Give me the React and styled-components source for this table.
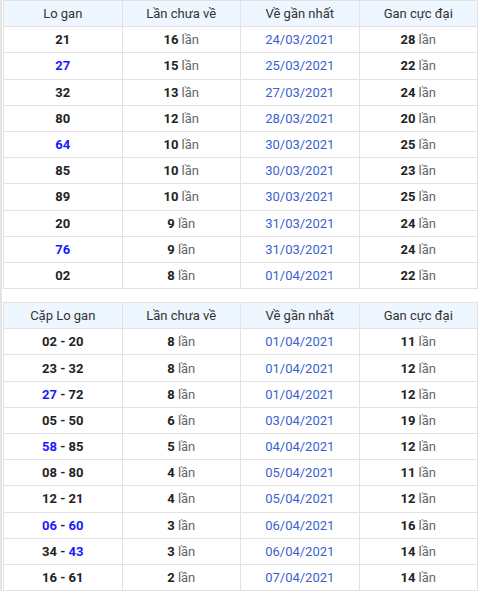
import React from "react";
import styled, { createGlobalStyle } from "styled-components";

const Global = createGlobalStyle`
  html, body { margin: 0; padding: 0; background: #fff; }
  body { font-family: Roboto, "Liberation Sans", Arial, sans-serif; }
`;

const Page = styled.div`
  width: 480px;
  box-sizing: border-box;
  border-left: 2px solid #e4e4e4;
  padding: 0 2px 0 1px;
  display: flex;
  flex-direction: column;
  gap: 13px;
`;

const Table = styled.table`
  width: 475px;
  border-collapse: collapse;
  table-layout: fixed;
  border: 1px solid #e2e2e2;
`;

const Th = styled.th`
  height: 25.2px;
  padding: 0;
  background: #eef6ff;
  border: 1px solid #e2e2e2;
  font-weight: 400;
  font-size: 13px;
  color: #333;
  text-align: center;
`;

const Td = styled.td`
  height: 25.2px;
  padding: 0;
  border: 1px solid #e2e2e2;
  font-size: 13px;
  text-align: center;
  color: ${(p) => (p.$date ? "#3b5fcf" : "#222")};
`;

const Num = styled.b`
  font-weight: 700;
  color: ${(p) => (p.$blue ? "#1a1aff" : "#222")};
`;

const Unit = styled.span`
  color: #666;
  font-weight: 400;
`;

const loGan = [
  ["21", 16, "24/03/2021", 28],
  ["27", 15, "25/03/2021", 22, true],
  ["32", 13, "27/03/2021", 24],
  ["80", 12, "28/03/2021", 20],
  ["64", 10, "30/03/2021", 25, true],
  ["85", 10, "30/03/2021", 23],
  ["89", 10, "30/03/2021", 25],
  ["20", 9, "31/03/2021", 24],
  ["76", 9, "31/03/2021", 24, true],
  ["02", 8, "01/04/2021", 22],
];

const capLo = [
  [["02", false], ["20", false], 8, "01/04/2021", 11],
  [["23", false], ["32", false], 8, "01/04/2021", 12],
  [["27", true], ["72", false], 8, "01/04/2021", 12],
  [["05", false], ["50", false], 6, "03/04/2021", 19],
  [["58", true], ["85", false], 5, "04/04/2021", 12],
  [["08", false], ["80", false], 4, "05/04/2021", 11],
  [["12", false], ["21", false], 4, "05/04/2021", 12],
  [["06", true], ["60", true], 3, "06/04/2021", 16],
  [["34", false], ["43", true], 3, "06/04/2021", 14],
  [["16", false], ["61", false], 2, "07/04/2021", 14],
];

const Count = ({ n }) => (
  <>
    <Num>{n}</Num> <Unit>lần</Unit>
  </>
);

export default function App() {
  return (
    <>
      <Global />
      <Page>
        <Table>
          <thead>
            <tr>
              <Th>Lo gan</Th>
              <Th>Lần chưa về</Th>
              <Th>Về gần nhất</Th>
              <Th>Gan cực đại</Th>
            </tr>
          </thead>
          <tbody>
            {loGan.map(([lo, c, d, g, blue]) => (
              <tr key={lo}>
                <Td><Num $blue={blue}>{lo}</Num></Td>
                <Td><Count n={c} /></Td>
                <Td $date>{d}</Td>
                <Td><Count n={g} /></Td>
              </tr>
            ))}
          </tbody>
        </Table>
        <Table>
          <thead>
            <tr>
              <Th>Cặp Lo gan</Th>
              <Th>Lần chưa về</Th>
              <Th>Về gần nhất</Th>
              <Th>Gan cực đại</Th>
            </tr>
          </thead>
          <tbody>
            {capLo.map(([a, b, c, d, g]) => (
              <tr key={a[0] + b[0]}>
                <Td>
                  <Num $blue={a[1]}>{a[0]}</Num> <Num>-</Num> <Num $blue={b[1]}>{b[0]}</Num>
                </Td>
                <Td><Count n={c} /></Td>
                <Td $date>{d}</Td>
                <Td><Count n={g} /></Td>
              </tr>
            ))}
          </tbody>
        </Table>
      </Page>
    </>
  );
}
